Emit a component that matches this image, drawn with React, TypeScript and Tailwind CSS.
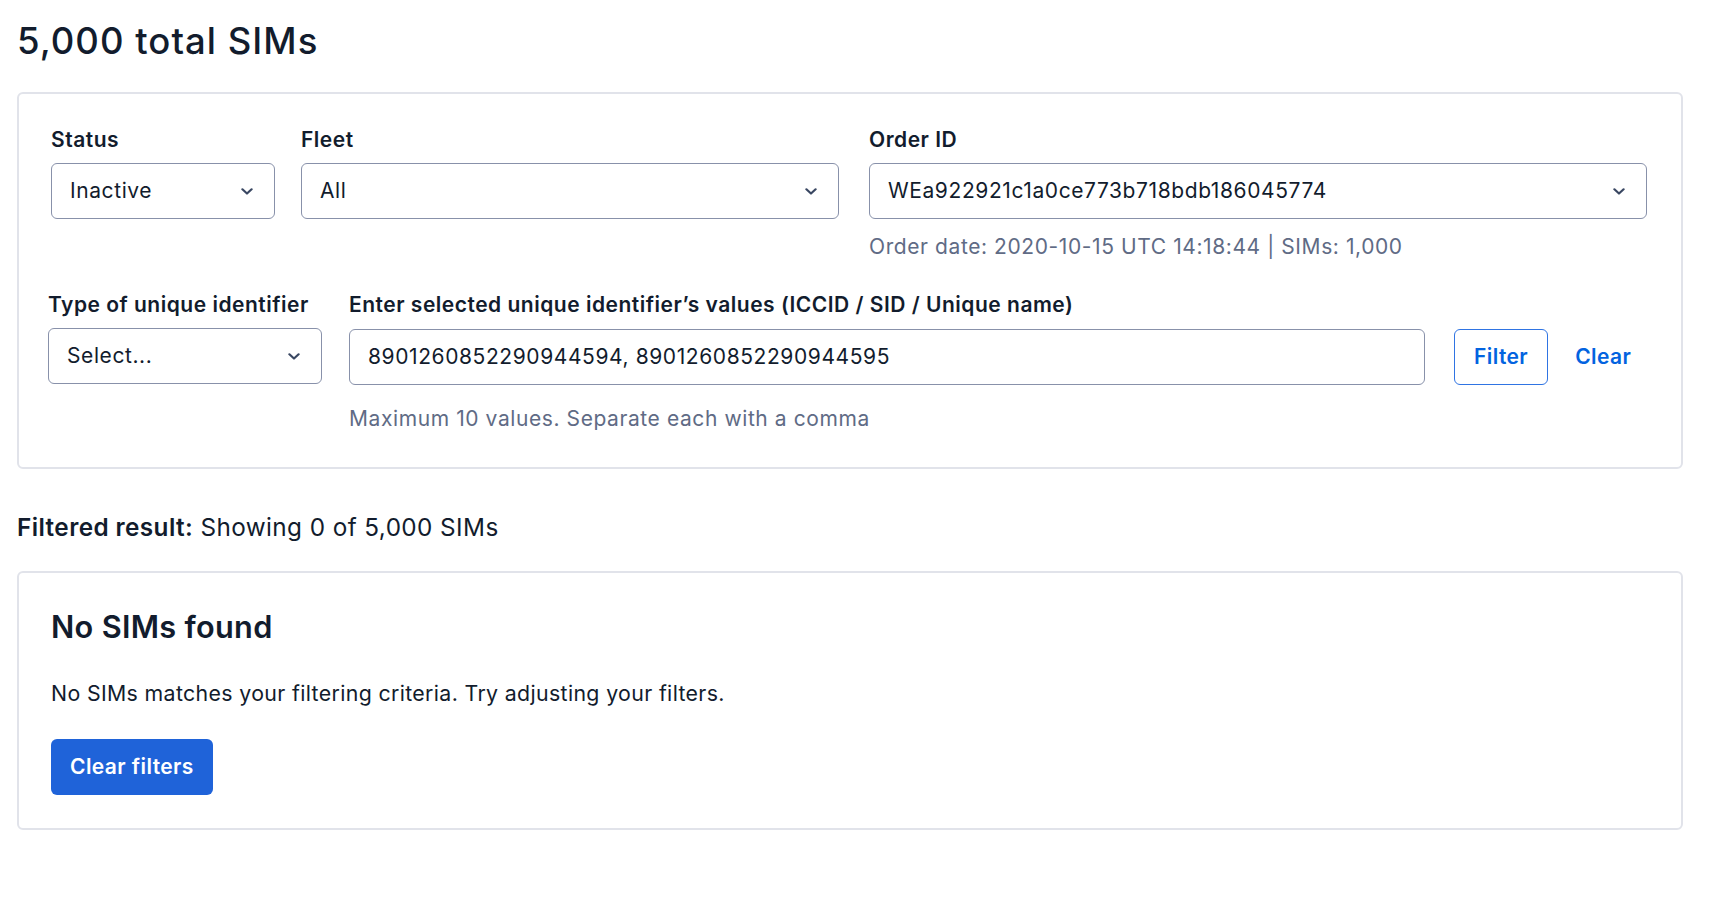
import React from "react";

const Chevron = () => (
  <svg width="12" height="7" viewBox="0 0 12 7" fill="none" className="shrink-0">
    <polyline points="1.4,1.3 6,5.5 10.6,1.3" stroke="#394762" strokeWidth="2.2" strokeLinecap="round" strokeLinejoin="round" />
  </svg>
);

const SelectBox = ({ value }: { value: string }) => (
  <div className="h-[56px] border border-[#8891aa] rounded-[6px] bg-white flex items-center justify-between pl-[18px] pr-[21px]">
    <span className="text-[21px] text-[#121c2d] leading-[30px] tracking-[0.028em] whitespace-nowrap">{value}</span>
    <Chevron />
  </div>
);

const Label = ({ children }: { children: React.ReactNode }) => (
  <div className="text-[21px] font-semibold leading-[30px] tracking-[0.024em] text-[#121c2d] whitespace-nowrap">{children}</div>
);

export default function App() {
  return (
    <div className="min-h-screen bg-white text-[#121c2d]" style={{ fontFamily: "Inter, 'Noto Sans', sans-serif" }}>
      <div className="pl-[17px] pt-[17px] w-[1683px]">
        <h1 className="text-[36.5px] leading-[49px] font-medium tracking-[0.028em]">5,000 total SIMs</h1>

        <div className="mt-[26px] border-2 border-[#e1e3ea] rounded-[6px] pt-[31px] pb-[33px] pl-[32px] pr-[34px]">
          <div className="flex items-start">
            <div className="w-[224px]">
              <Label>Status</Label>
              <div className="mt-[8px]">
                <SelectBox value="Inactive" />
              </div>
            </div>
            <div className="ml-[26px] w-[538px]">
              <Label>Fleet</Label>
              <div className="mt-[8px]">
                <SelectBox value="All" />
              </div>
            </div>
            <div className="ml-[30px] flex-1">
              <Label>Order ID</Label>
              <div className="mt-[8px]">
                <SelectBox value="WEa922921c1a0ce773b718bdb186045774" />
              </div>
              <div className="mt-[13px] text-[21px] leading-[30px] tracking-[0.028em] text-[#606b85] whitespace-nowrap">
                Order date: 2020-10-15 UTC 14:18:44 | SIMs: 1,000
              </div>
            </div>
          </div>

          <div className="mt-[28px] -ml-[3px] flex items-start">
            <div className="w-[274px]">
              <Label>Type of unique identifier</Label>
              <div className="mt-[8px]">
                <SelectBox value="Select..." />
              </div>
            </div>
            <div className="ml-[27px] w-[1076px]">
              <Label>Enter selected unique identifier’s values (ICCID / SID / Unique name)</Label>
              <div className="mt-[9px] h-[56px] border border-[#8891aa] rounded-[6px] flex items-center pl-[18px]">
                <span className="text-[21px] leading-[30px] tracking-[0.028em] text-[#121c2d]">8901260852290944594, 8901260852290944595</span>
              </div>
              <div className="mt-[19px] text-[21px] leading-[30px] tracking-[0.028em] text-[#606b85]">
                Maximum 10 values. Separate each with a comma
              </div>
            </div>
            <button className="ml-[29px] mt-[39px] h-[56px] px-[19px] border border-[#2f74e3] rounded-[6px] text-[21px] font-semibold tracking-[0.02em] text-[#0263e0] bg-white">
              Filter
            </button>
            <button className="ml-[27px] mt-[39px] h-[56px] text-[21px] font-semibold tracking-[0.02em] text-[#0263e0]">
              Clear
            </button>
          </div>
        </div>

        <p className="mt-[40px] text-[24.3px] leading-[36px] tracking-[0.017em]">
          <span className="font-semibold">Filtered result:</span> Showing 0 of 5,000 SIMs
        </p>

        <div className="mt-[26px] border-2 border-[#e1e3ea] rounded-[6px] pt-[32px] pb-[33px] pl-[32px] pr-[34px]">
          <h3 className="text-[30.7px] leading-[43px] font-semibold tracking-[0.01em]">No SIMs found</h3>
          <p className="mt-[30px] text-[21.3px] leading-[30px] tracking-[0.017em]">
            No SIMs matches your filtering criteria. Try adjusting your filters.
          </p>
          <button className="mt-[31px] h-[56px] px-[19px] rounded-[6px] bg-[#1f63d9] text-white text-[21px] font-semibold tracking-[0.02em]">
            Clear filters
          </button>
        </div>
      </div>
    </div>
  );
}
